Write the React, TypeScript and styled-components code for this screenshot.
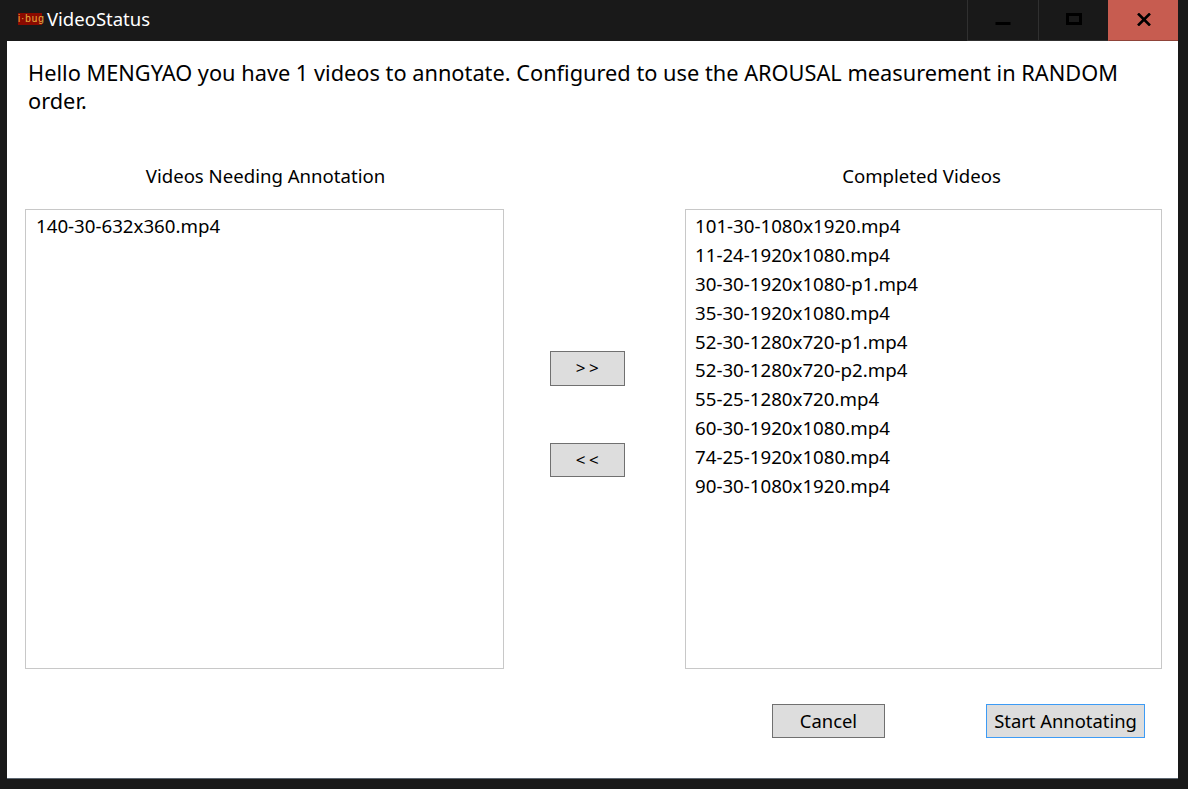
import React from "react";
import styled, { createGlobalStyle } from "styled-components";

const Global = createGlobalStyle`
  html, body { margin: 0; padding: 0; background: #191919; }
  body { width: 1188px; height: 789px; overflow: hidden; }
  * { box-sizing: border-box; }
`;

const Window = styled.div`
  width: 1188px;
  height: 789px;
  background: #191919;
  display: flex;
  flex-direction: column;
  font-family: "Noto Sans", "Open Sans", sans-serif;
  color: #000;
`;

const TitleBar = styled.header`
  height: 41px;
  flex: none;
  display: flex;
  align-items: stretch;
  padding: 0 10px 0 18px;
`;

const Logo = styled.span`
  width: 24px;
  height: 12px;
  margin-top: 13px;
  background: #8a0a00;
  color: #e8b040;
  font: 10px/12px "Liberation Sans", sans-serif;
  letter-spacing: 0.9px;
  text-align: center;
  white-space: nowrap;
`;

const WindowTitle = styled.span`
  margin-left: 5px;
  font-size: 18.5px;
  line-height: 38px;
  color: #fff;
  flex: 1;
`;

const Control = styled.button<{ $close?: boolean }>`
  width: 70px;
  padding: 0 0 2px;
  border: 0;
  border-left: 1px solid ${(p) => (p.$close ? "#c75c50" : "#303030")};
  border-bottom: 1px solid ${(p) => (p.$close ? "#8f4339" : "#303030")};
  background: ${(p) => (p.$close ? "#c75c50" : "#191919")};
  display: flex;
  align-items: center;
  justify-content: center;
  &:first-of-type { width: 71px; }
`;

const Content = styled.main`
  flex: none;
  width: 1171px;
  height: 737px;
  margin-left: 7px;
  background: #fff;
  padding: 18px 16px 0 18px;
  box-shadow: 0 1px 0 #5c6670;
  display: flex;
  flex-direction: column;
`;

const Message = styled.p`
  margin: 0 0 0 3px;
  font-size: 21.77px;
  line-height: 28px;
  height: 56px;
  width: 1110px;
`;

const Columns = styled.section`
  display: grid;
  grid-template-columns: 479px 181px 477px;
  margin-top: 46px;
  height: 508px;
`;

const Column = styled.div`
  display: flex;
  flex-direction: column;
`;

const ColumnTitle = styled.h2<{ $shiftLeft?: number; $shiftRight?: number }>`
  margin: 0;
  height: 48px;
  padding: 2px ${(p) => p.$shiftLeft ?? 0}px 0 ${(p) => p.$shiftRight ?? 0}px;
  font-size: 18.6px;
  line-height: 25px;
  font-weight: 400;
  text-align: center;
`;

const List = styled.ul<{ $inset?: number }>`
  margin: 0;
  padding: 1px 9px 1px ${(p) => p.$inset ?? 9}px;
  list-style: none;
  height: 460px;
  border: 1px solid #c8c8c8;
`;

const Item = styled.li`
  font-size: 18.7px;
  line-height: 29px;
  height: 28.9px;
  white-space: nowrap;
`;

const Movers = styled.div`
  display: flex;
  flex-direction: column;
  align-items: center;
  gap: 57px;
  padding: 190px 14px 0 0;
`;

const Button = styled.button<{ $focus?: boolean; $w: number; $h?: number }>`
  width: ${(p) => p.$w}px;
  height: ${(p) => p.$h ?? 34}px;
  padding: 0 0 2px;
  border: 1px solid ${(p) => (p.$focus ? "#3d9bf5" : "#707070")};
  background: #dddddd;
  color: #000;
  font-family: inherit;
  font-size: 18.4px;
  white-space: nowrap;
`;

const MoverButton = styled(Button)`
  font-size: 17px;
  letter-spacing: 3.5px;
  padding-left: 3px;
`;

const Actions = styled.div`
  display: flex;
  justify-content: flex-end;
  gap: 101px;
  margin-top: 35px;
  padding-right: 17px;
`;

const left = ["140-30-632x360.mp4"];
const right = [
  "101-30-1080x1920.mp4",
  "11-24-1920x1080.mp4",
  "30-30-1920x1080-p1.mp4",
  "35-30-1920x1080.mp4",
  "52-30-1280x720-p1.mp4",
  "52-30-1280x720-p2.mp4",
  "55-25-1280x720.mp4",
  "60-30-1920x1080.mp4",
  "74-25-1920x1080.mp4",
  "90-30-1080x1920.mp4",
];

export default function App() {
  return (
    <Window>
      <Global />
      <TitleBar>
        <Logo>i·bug</Logo>
        <WindowTitle>VideoStatus</WindowTitle>
        <Control aria-label="Minimize">
          <svg width="16" height="12" viewBox="0 0 16 12"><rect x="0.5" y="9" width="15" height="3" fill="#000" /></svg>
        </Control>
        <Control aria-label="Maximize">
          <svg width="16" height="12" viewBox="0 0 16 12"><rect x="1.5" y="1.5" width="13" height="9" fill="none" stroke="#000" strokeWidth="3" /></svg>
        </Control>
        <Control $close aria-label="Close">
          <svg width="14" height="13" viewBox="0 0 14 13"><path d="M1 .5 13 12.5M13 .5 1 12.5" fill="none" stroke="#000" strokeWidth="2.6" /></svg>
        </Control>
      </TitleBar>
      <Content>
        <Message>Hello MENGYAO you have 1 videos to annotate. Configured to use the AROUSAL measurement in RANDOM order.</Message>
        <Columns>
          <Column>
            <ColumnTitle $shiftRight={2}>Videos Needing Annotation</ColumnTitle>
            <List $inset={10}>{left.map((v) => <Item key={v}>{v}</Item>)}</List>
          </Column>
          <Movers>
            <MoverButton $w={75} $h={35}>&gt;&gt;</MoverButton>
            <MoverButton $w={75}>&lt;&lt;</MoverButton>
          </Movers>
          <Column>
            <ColumnTitle $shiftLeft={4}>Completed Videos</ColumnTitle>
            <List>{right.map((v) => <Item key={v}>{v}</Item>)}</List>
          </Column>
        </Columns>
        <Actions>
          <Button $w={113}>Cancel</Button>
          <Button $w={159} $focus>Start Annotating</Button>
        </Actions>
      </Content>
    </Window>
  );
}
